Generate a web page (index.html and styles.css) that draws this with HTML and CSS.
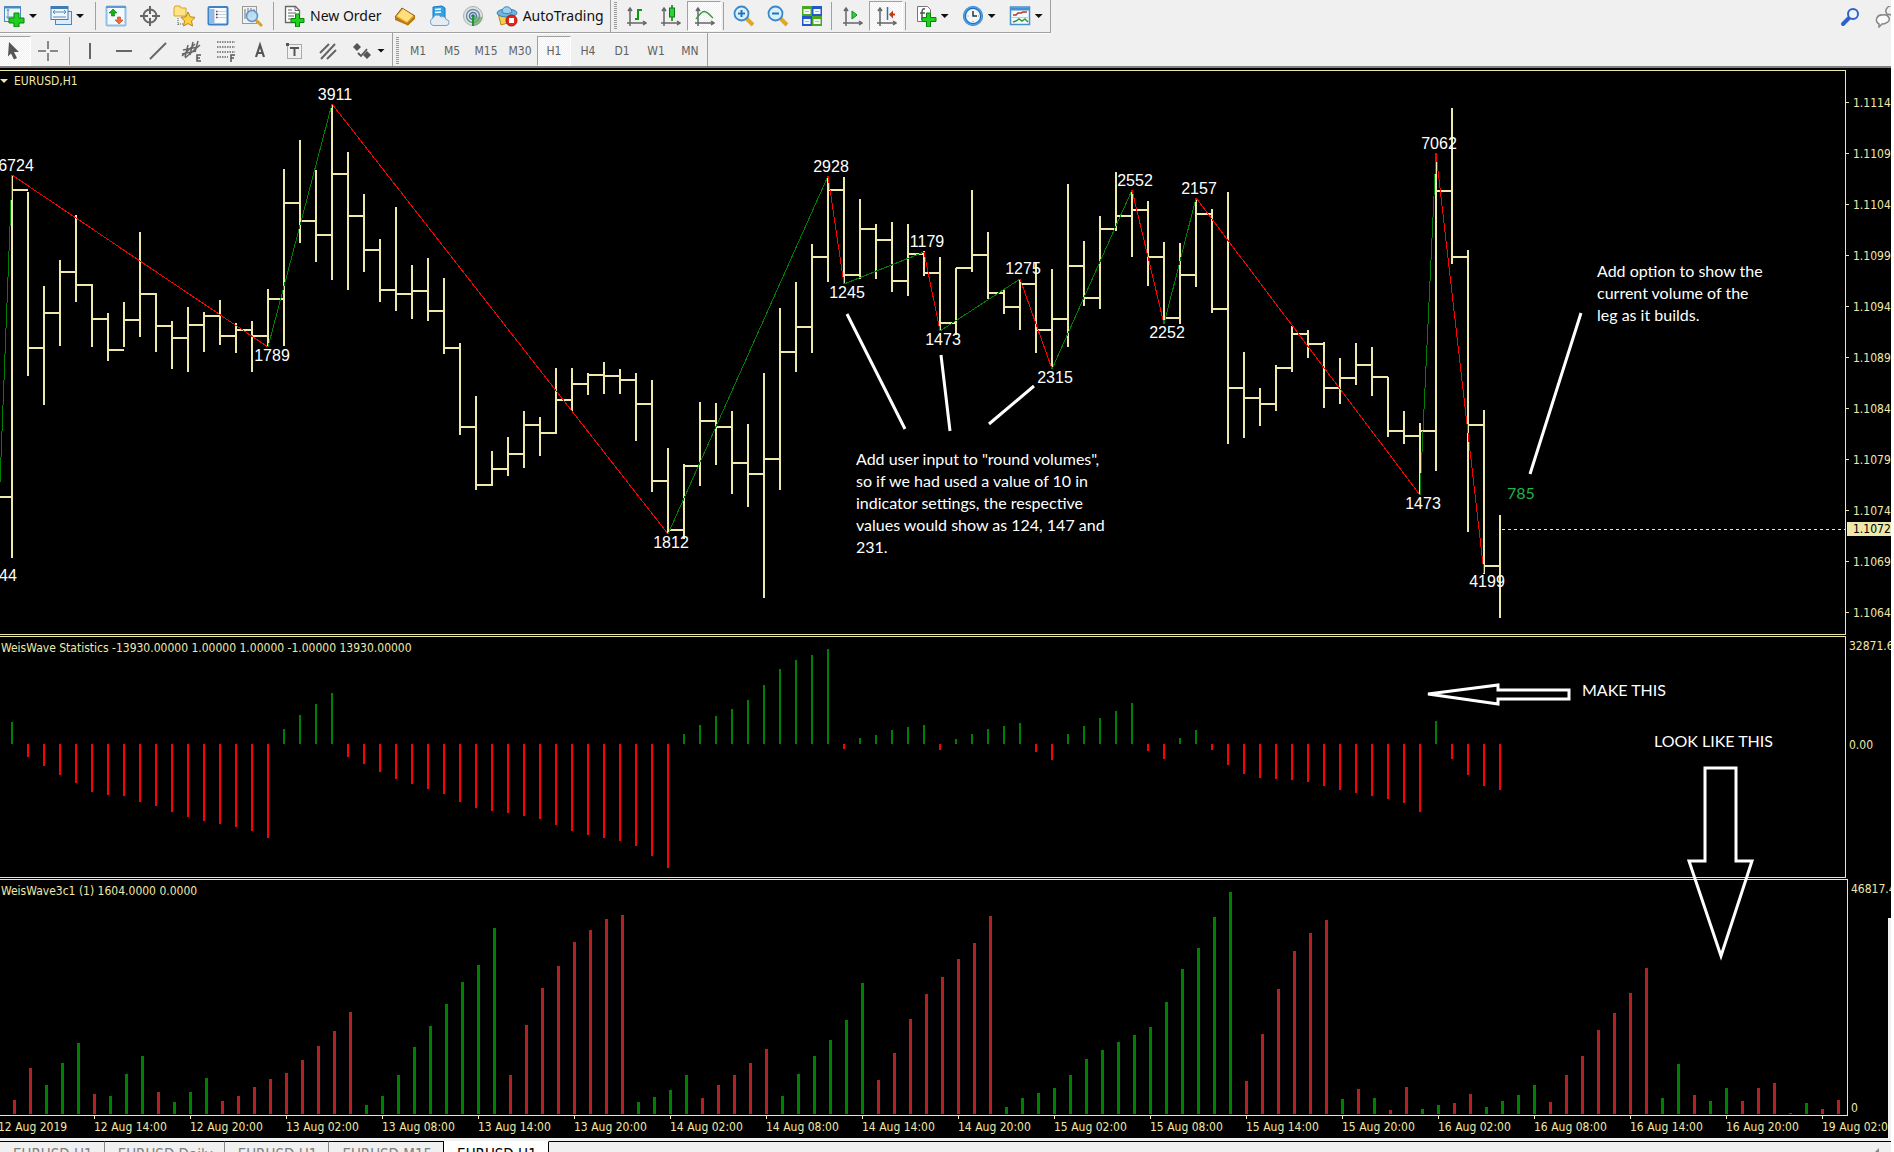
FILE: index.html
```html
<!DOCTYPE html>
<html lang="en">
<head>
<meta charset="utf-8">
<meta name="viewport" content="width=device-width, initial-scale=1">
<title>EURUSD,H1</title>
<link rel="stylesheet" href="styles.css">
</head>
<body>
<div class="window">
<header class="toolbars">
  <div class="toolbar-row">
    <div class="toolbar toolbar-standard">
      <button class="tool split" aria-label="New chart"><span class="icon"><svg viewBox="0 0 22 22"><rect x="1.500" y="1.500" width="16" height="15" fill="#eaf4fc" stroke="#4a88bd"/><path d="M1 2.500h17" stroke="#4a88bd" stroke-width="2"/><path d="M5 5v9M3 12h9M4 6l1-2 1 2" stroke="#6d8fae" fill="none"/><path d="M11 8h5v5h5v5h-5v4h-5v-4H6v-5h5z" fill="#1fd01f" stroke="#07840c"/></svg></span><span class="caret"></span></button>
      <button class="tool split" aria-label="Profiles"><span class="icon"><svg viewBox="0 0 22 22"><rect x="5.500" y="6.500" width="16" height="13" fill="#dcecf8" stroke="#4a88bd"/><rect x="1" y="1.500" width="17" height="13" fill="#eef6fd" stroke="#3f7cb5"/><path d="M1 3h17" stroke="#3f7cb5" stroke-width="2"/><path d="M3 7h13M5 5L3 7l2 2M14 5l2 2-2 2M3 12h13" stroke="#5a87b0" fill="none"/></svg></span><span class="caret"></span></button>
      <span class="sep"></span>
      <button class="tool" aria-label="Market watch"><span class="icon"><svg viewBox="0 0 22 22"><rect x="1.500" y="1.500" width="19" height="19" rx="1" fill="#f3faff" stroke="#8fbfe6" stroke-width="2"/><path d="M1 2h20" stroke="#5b9bd5" stroke-width="2"/><path d="M8 4l4 4H9.500v3h-3V8H4z" fill="#18b018" stroke="#067006" stroke-width=".6"/><path d="M14 19l-4-4h2.500v-3h3v3H18z" fill="#f2683b" stroke="#c13c10" stroke-width=".6"/></svg></span></button>
      <button class="tool" aria-label="Data window"><span class="icon"><svg viewBox="0 0 22 22"><circle cx="11" cy="11" r="6.500" fill="none" stroke="#666" stroke-width="2"/><path d="M11 1v8M11 13v8M1 11h8M13 11h8" stroke="#666" stroke-width="2"/></svg></span></button>
      <button class="tool" aria-label="Navigator"><span class="icon"><svg viewBox="0 0 22 22"><path d="M1 3l1-2h5l1 2h5v8H1z" fill="#ffe486" stroke="#d4a22a"/><path d="M5 13v7M5 19h6" stroke="#555" stroke-dasharray="1 1"/><path d="M15 7l2.200 4.800 5 .6-3.700 3.500 1 5.100-4.500-2.500-4.500 2.500 1-5.100L8 12.400l5-.6z" fill="#ffd23c" stroke="#b9851a"/></svg></span></button>
      <button class="tool" aria-label="Terminal"><span class="icon"><svg viewBox="0 0 22 22"><rect x="1.500" y="2" width="19" height="17.500" rx="1" fill="#f6fbff" stroke="#3d82c4" stroke-width="2"/><rect x="3" y="4" width="4.500" height="14" fill="#8ebce4"/><path d="M9 6.500h10M9 9.500h10M9 12.500h10" stroke="#c9d3dc"/><path d="M9 6.500h1.500M9 12.500h1.500" stroke="#d22" stroke-width="1.500"/><path d="M9 9.500h1.500" stroke="#222" stroke-width="1.500"/></svg></span></button>
      <button class="tool" aria-label="Strategy tester"><span class="icon"><svg viewBox="0 0 22 22"><rect x="1.500" y="1.500" width="14" height="17" fill="#f1f1f1" stroke="#999"/><path d="M4 4v10M7 3v8M10 3v9M13 4v6" stroke="#777"/><circle cx="11" cy="11" r="5.500" fill="#b9dcf6" fill-opacity=".85" stroke="#5b97cd" stroke-width="1.500"/><path d="M15 15l6 6" stroke="#d7a523" stroke-width="3"/></svg></span></button>
      <span class="sep"></span>
      <button class="tool labelled"><span class="icon"><svg viewBox="0 0 22 22"><path d="M2.500 1.500h10l4 4v12h-14z" fill="#fff" stroke="#666" stroke-width="1.300"/><path d="M12 1.500v4h4M5 5h4M5 8h8M5 11h6M5 14h4" stroke="#666" fill="none"/><path d="M12.500 9h4v4.500h4.500v4h-4.500V22h-4v-4.500H8v-4h4.500z" fill="#1fd01f" stroke="#07840c"/></svg></span>New Order</button>
      <button class="tool" aria-label="MetaEditor"><span class="icon"><svg viewBox="0 0 22 22"><path d="M1 12l7-9 13 8-7 9z" fill="#e2a52c" stroke="#8a5c0e"/><path d="M3 11l6-7 10 6.500-6 6.500z" fill="#ffdf7c"/><path d="M1 12l12 6 8-7v3l-7 6.500L1 15z" fill="#b87a14"/></svg></span></button>
      <button class="tool" aria-label="Virtual hosting"><span class="icon"><svg viewBox="0 0 22 22"><path d="M5 2l9-1 3 2v11H5z" fill="#2fa3ea" stroke="#1479bd"/><path d="M7 4.500l6-.6M7 7.500l6-.6" stroke="#fff" stroke-width="1.500"/><path d="M5 20.500a4 4 0 010-7.500 4.500 4.500 0 018-1 3.500 3.500 0 015 2.500 3 3 0 010 6z" fill="#e4ecf6" stroke="#7d9cc6"/></svg></span></button>
      <button class="tool" aria-label="Signals"><span class="icon"><svg viewBox="0 0 22 22"><circle cx="11" cy="11" r="9.500" fill="#dfe5e5" stroke="#a5b2b2"/><circle cx="11" cy="11" r="6.500" fill="none" stroke="#7892a5" stroke-width="1.500"/><circle cx="11" cy="11" r="3.500" fill="none" stroke="#4c77a3" stroke-width="1.500"/><path d="M11 11v10c5 0 9-4 9.500-9" fill="#65ac65" fill-opacity=".7"/><circle cx="11" cy="11" r="1.800" fill="#2b62a0"/><path d="M11 11v10" stroke="#1b9a2c" stroke-width="2"/></svg></span></button>
      <button class="tool labelled"><span class="icon"><svg viewBox="0 0 22 22"><path d="M2 8l3 12 10-3 4-8z" fill="#f5cf4e" stroke="#b98a1c"/><ellipse cx="11" cy="8" rx="10" ry="4" fill="#6fb4dd" stroke="#3b82b4"/><path d="M6 7c0-7 9-7 10 0-2 2-8 2-10 0z" fill="#9dd2ee" stroke="#3b82b4"/><circle cx="15.500" cy="15.500" r="5.500" fill="#e4261b" stroke="#a5150d"/><rect x="13" y="13" width="5" height="5" fill="#fff"/></svg></span>AutoTrading</button>
    </div>
    <div class="toolbar toolbar-charts">
      <span class="grip"></span>
      <button class="tool" aria-label="Bar chart"><span class="icon"><svg viewBox="0 0 22 22"><path d="M5 3v18M2 18h19M3 6l2-3 2 3M18 16l3 2-3 2" stroke="#666" stroke-width="1.500" fill="none"/><path d="M13 4v11M13 5h4M10 14h3" stroke="#0a9a12" stroke-width="2"/></svg></span></button>
      <button class="tool" aria-label="Candlesticks"><span class="icon"><svg viewBox="0 0 22 22"><path d="M5 3v18M2 18h19M3 6l2-3 2 3M18 16l3 2-3 2" stroke="#666" stroke-width="1.500" fill="none"/><path d="M13 0v16" stroke="#087a0e" stroke-width="1.500"/><rect x="10.500" y="3" width="5" height="9" fill="#2ed13a" stroke="#087a0e"/></svg></span></button>
      <button class="tool pressed" aria-label="Line chart" aria-pressed="true"><span class="icon"><svg viewBox="0 0 22 22"><path d="M5 3v18M2 18h19M3 6l2-3 2 3M18 16l3 2-3 2" stroke="#666" stroke-width="1.500" fill="none"/><path d="M3 14c4-5 7-9 10-7 3 1 4 4 7 6" stroke="#3a9a42" stroke-width="1.500" fill="none"/></svg></span></button>
      <span class="sep"></span>
      <button class="tool" aria-label="Zoom in"><span class="icon"><svg viewBox="0 0 22 22"><path d="M13 13l7 7" stroke="#dcaa28" stroke-width="4"/><circle cx="8.500" cy="8.500" r="7" fill="#d8effd" stroke="#3c87c8" stroke-width="1.800"/><path d="M8.500 5v7M5 8.500h7" stroke="#2b72b5" stroke-width="2"/></svg></span></button>
      <button class="tool" aria-label="Zoom out"><span class="icon"><svg viewBox="0 0 22 22"><path d="M13 13l7 7" stroke="#dcaa28" stroke-width="4"/><circle cx="8.500" cy="8.500" r="7" fill="#d8effd" stroke="#3c87c8" stroke-width="1.800"/><path d="M5 8.500h7" stroke="#2b72b5" stroke-width="2"/></svg></span></button>
      <button class="tool" aria-label="Tile windows"><span class="icon"><svg viewBox="0 0 22 22"><path d="M1 1h10v10H1zM11 11h10v10H11z" fill="#4aa81c"/><path d="M11 1h10v10H11zM1 11h10v10H1z" fill="#2457c8"/><path d="M2.500 4h7v5h-7zM12.500 4h7v5h-7zM2.500 14h7v5h-7zM12.500 14h7v5h-7z" fill="#f4f8ff"/><path d="M4 6.500h4M14 6.500h4M4 16.500h4M14 16.500h4" stroke="#a8bcd4"/></svg></span></button>
      <span class="sep"></span>
      <button class="tool" aria-label="Auto scroll"><span class="icon"><svg viewBox="0 0 22 22"><path d="M5 3v18M2 18h19M3 6l2-3 2 3M18 16l3 2-3 2" stroke="#666" stroke-width="1.500" fill="none"/><path d="M11 6l5 4-5 4z" fill="#36d045" stroke="#0a8a14"/></svg></span></button>
      <button class="tool pressed" aria-label="Chart shift" aria-pressed="true"><span class="icon"><svg viewBox="0 0 22 22"><path d="M5 3v18M2 18h19M3 6l2-3 2 3M18 16l3 2-3 2" stroke="#666" stroke-width="1.500" fill="none"/><path d="M12.500 2v13" stroke="#2b6fae" stroke-width="1.500"/><path d="M20 9.500h-5" stroke="#c5380e" stroke-width="2"/><path d="M14 9.500l4-4v8z" fill="#c5380e"/></svg></span></button>
      <span class="sep"></span>
      <button class="tool split" aria-label="Indicators"><span class="icon"><svg viewBox="0 0 22 22"><path d="M2.500 1.500h10l3 3v12h-13z" fill="#fff" stroke="#777"/><path d="M10 4c-3-1-3 2-3 5v6M5 8h5" stroke="#555" stroke-width="1.500" fill="none"/><path d="M11.500 8h4v4.500H21v4h-5.500V22h-4v-5.500H7v-4h4.500z" fill="#1fd01f" stroke="#07840c"/></svg></span><span class="caret"></span></button>
      <button class="tool split" aria-label="Periods"><span class="icon"><svg viewBox="0 0 22 22"><circle cx="11" cy="11" r="10" fill="#1f6fc0"/><circle cx="11" cy="11" r="9" fill="none" stroke="#4ea0e4" stroke-width="1.500"/><circle cx="11" cy="11" r="7" fill="#f3f7fb"/><path d="M11 6v5h4" stroke="#333" stroke-width="1.500" fill="none"/><path d="M11 16v1M5.500 11h1M16 11h1" stroke="#888"/></svg></span><span class="caret"></span></button>
      <button class="tool split" aria-label="Templates"><span class="icon"><svg viewBox="0 0 22 22"><rect x="1.500" y="2" width="19" height="17.500" fill="#f5faff" stroke="#4a90cc" stroke-width="1.500"/><path d="M1 4h20" stroke="#4a90cc" stroke-width="3"/><path d="M4 10h3l2-2h3l2-1h4" stroke="#b33a22" stroke-width="1.500" fill="none"/><path d="M3 12.500h16" stroke="#b8d0e4"/><path d="M4 17l3-1 3-2 3 2 3-2 3 3" stroke="#2f9a3c" stroke-width="1.500" fill="none"/></svg></span><span class="caret"></span></button>
    </div>
    <div class="corner-tools">
      <button class="corner" aria-label="Search"><svg viewBox="0 0 22 22"><path d="M9 12l-6 6" stroke="#2f62c9" stroke-width="4" stroke-linecap="round"/><circle cx="13" cy="8" r="5" fill="#eef4fd" stroke="#2f62c9" stroke-width="2"/></svg></button>
      <button class="corner" aria-label="Chat"><svg viewBox="0 0 22 22"><path d="M13 8a5 5 0 017-7 6 5 0 012 9z" fill="#f2f2f2" stroke="#888" stroke-width="1.500"/><path d="M5 18c-5-3-2-10 4-9 6-1 9 6 3 8-1 1-3 1-4 1l-3 3z" fill="#fafafa" stroke="#888" stroke-width="1.500"/></svg></button>
    </div>
  </div>
  <div class="toolbar-row">
    <div class="toolbar toolbar-line">
      <button class="tool pressed" aria-label="Cursor" aria-pressed="true"><span class="icon"><svg viewBox="0 0 22 22"><path d="M6 2l10 10h-5l3 6-3 1.500-3-6-3 3z" fill="#555"/></svg></span></button>
      <button class="tool" aria-label="Crosshair"><span class="icon"><svg viewBox="0 0 22 22"><path d="M11 1v8M11 13v8M1 11h8M13 11h8" stroke="#666" stroke-width="1.500"/></svg></span></button>
      <span class="sep"></span>
      <button class="tool" aria-label="Vertical line"><span class="icon"><svg viewBox="0 0 22 22"><path d="M11 3v16" stroke="#666" stroke-width="2"/></svg></span></button>
      <button class="tool" aria-label="Horizontal line"><span class="icon"><svg viewBox="0 0 22 22"><path d="M3 11h16" stroke="#666" stroke-width="2"/></svg></span></button>
      <button class="tool" aria-label="Trendline"><span class="icon"><svg viewBox="0 0 22 22"><path d="M3 19L19 3" stroke="#666" stroke-width="2"/></svg></span></button>
      <button class="tool" aria-label="Equidistant channel"><span class="icon"><svg viewBox="0 0 22 22"><path d="M1 16L14 4M4 18L19 5M2 10l15-3M1 14l14-3M7 5L4 17M12 2L9 15M17 1l-3 11" stroke="#666" stroke-width="1.500"/><path d="M20 15h-4v6h4M16 18h3" stroke="#555" stroke-width="1.500" fill="none"/></svg></span></button>
      <button class="tool" aria-label="Fibonacci retracement"><span class="icon"><svg viewBox="0 0 22 22"><path d="M2 2h18M2 7h18M2 12h18M2 17h11" stroke="#666" stroke-width="1.500" stroke-dasharray="1.500 1"/><path d="M20 15h-4v7M16 18h3" stroke="#555" stroke-width="1.500" fill="none"/></svg></span></button>
      <button class="tool" aria-label="Text"><span class="icon"><svg viewBox="0 0 22 22"><path d="M7 17l4-12 4 12M8.500 13h5" stroke="#555" stroke-width="2.200" fill="none"/></svg></span></button>
      <button class="tool" aria-label="Text label"><span class="icon"><svg viewBox="0 0 22 22"><rect x="4.500" y="4.500" width="14" height="14" fill="none" stroke="#666" stroke-dasharray="1 1"/><path d="M3 3h3v3H3z" fill="#555"/><path d="M7 8h9M11.500 8v8" stroke="#555" stroke-width="2"/></svg></span></button>
      <button class="tool" aria-label="Pitchfork"><span class="icon"><svg viewBox="0 0 22 22"><path d="M3 13L12 4M4 19L18 4M10 19l9-9" stroke="#666" stroke-width="2"/></svg></span></button>
      <button class="tool split" aria-label="Arrows"><span class="icon"><svg viewBox="0 0 22 22"><path d="M6 3l4 4-4 4-4-4zM12 15h8l-4 4zM12 15l4-4 4 4z" fill="#555"/><path d="M7 13l3 3 6-7" stroke="#555" stroke-width="1.800" fill="none"/></svg></span><span class="caret"></span></button>
    </div>
    <div class="toolbar toolbar-periods">
      <span class="grip"></span>
      <button class="tool">M1</button>
      <button class="tool">M5</button>
      <button class="tool">M15</button>
      <button class="tool">M30</button>
      <button class="tool pressed" aria-pressed="true">H1</button>
      <button class="tool">H4</button>
      <button class="tool">D1</button>
      <button class="tool">W1</button>
      <button class="tool">MN</button>
    </div>
  </div>
</header>

<main class="charts">
  <section class="pane pane-price">
    <div class="plot">
      <h1 class="pane-title symbol">EURUSD,H1</h1>
      <svg class="canvas" role="img" aria-label="EURUSD hourly price bars">
        <g transform="translate(0 -71)">
          <path class="bars" d="M0 497H12M12 175V558M12 190H28M28 192V376M28 348H44M44 286V405M44 313H60M60 260V346M60 272H76M76 215V302M76 285H92M92 284V347M92 319H108M108 313V361M108 350H124M124 302V347M124 320H140M140 232V337M140 294H156M156 293V352M156 326H172M172 321V369M172 338H188M188 307V372M188 325H204M204 312V352M204 316H220M220 300V345M220 336H236M236 323V353M236 330H252M252 321V372M252 336H268M268 289V347M268 299H284M284 169V346M284 203H300M300 140V243M300 221H316M316 170V262M316 235H332M332 104V280M332 174H348M348 152V290M348 216H364M364 194V272M364 250H380M380 239V302M380 290H396M396 207V311M396 294H412M412 265V319M412 291H428M428 258V321M428 311H444M444 278V354M444 348H460M460 343V435M460 427H476M476 396V490M476 485H492M492 451V486M492 469H508M508 437V476M508 454H524M524 411V468M524 425H540M540 417V456M540 433H556M556 368V434M556 400H572M572 368V411M572 384H588M588 373V395M588 375H604M604 362V394M604 376H620M620 369V394M620 380H636M636 373V441M636 404H652M652 380V492M652 481H668M668 448V534M668 530H684M684 464V539M684 466H700M700 402V486M700 421H716M716 403V465M716 427H732M732 411V494M732 463H748M748 424V507M748 474H764M764 373V598M764 459H780M780 308V490M780 352H796M796 282V372M796 327H812M812 244V353M812 257H828M828 176V282M828 190H844M844 177V284M844 275H860M860 199V279M860 229H876M876 224V279M876 240H892M892 222V292M892 281H908M908 224V296M908 254H924M924 251V276M924 273H940M940 257V331M940 323H956M956 268V335M956 268H972M972 190V272M972 255H988M988 232V299M988 293H1004M1004 290V314M1004 307H1020M1020 279V330M1020 284H1036M1036 263V353M1036 330H1052M1052 269V369M1052 319H1068M1068 184V347M1068 266H1084M1084 241V306M1084 298H1100M1100 216V309M1100 229H1116M1116 172V231M1116 216H1132M1132 190V257M1132 210H1148M1148 201V286M1148 257H1164M1164 242V324M1164 318H1180M1180 243V324M1180 275H1196M1196 198V287M1196 214H1212M1212 209V313M1212 309H1228M1228 192V444M1228 388H1244M1244 352V438M1244 398H1260M1260 388V426M1260 404H1276M1276 365V411M1276 368H1292M1292 326V372M1292 334H1308M1308 330V358M1308 344H1324M1324 342V408M1324 388H1340M1340 358V404M1340 378H1356M1356 343V385M1356 365H1372M1372 347V396M1372 377H1388M1388 377V437M1388 431H1404M1404 411V444M1404 436H1420M1420 423V495M1420 431H1436M1436 153V471M1436 191H1452M1452 108V264M1452 257H1468M1468 250V532M1468 425H1484M1484 410V574M1484 566H1500M1500 515V618"/>
          <line class="bid" x1="1502" y1="529.500" x2="100%" y2="529.500"/>
          <path class="leg up" d="M-4 585L12 175M268 347L332 104M668 534L828 176M844 284L924 252M940 331L1020 279M1052 369L1132 190M1164 324L1196 198M1420 495L1436 153"/>
          <path class="leg down" d="M12 175L268 347M332 104L668 534M828 176L844 284M924 252L940 331M1020 279L1052 369M1132 190L1164 324M1196 198L1420 495M1436 153L1484 573"/>
          <g class="volumes">
            <text x="16" y="171">6724</text><text x="8" y="581">44</text><text x="272" y="361">1789</text><text x="335" y="100">3911</text>
            <text x="671" y="548">1812</text><text x="831" y="172">2928</text><text x="847" y="298">1245</text><text x="927" y="247">1179</text>
            <text x="943" y="345">1473</text><text x="1023" y="274">1275</text><text x="1055" y="383">2315</text><text x="1135" y="186">2552</text>
            <text x="1167" y="338">2252</text><text x="1199" y="194">2157</text><text x="1439" y="149">7062</text><text x="1423" y="509">1473</text><text x="1487" y="587">4199</text>
          </g>
        </g>
      </svg>
    </div>
    <div class="axis price-axis">
      <ul class="ticks">
        <li>1.1114</li><li>1.1109</li><li>1.1104</li><li>1.1099</li><li>1.1094</li><li>1.1089</li><li>1.1084</li><li>1.1079</li><li>1.1074</li><li>1.1069</li><li>1.1064</li>
      </ul>
      <span class="bid-tag">1.1072</span>
    </div>
  </section>

  <section class="pane pane-stats">
    <div class="plot">
      <h2 class="pane-title">WeisWave Statistics -13930.00000 1.00000 1.00000 -1.00000 13930.00000</h2>
      <svg class="canvas" role="img" aria-label="WeisWave Statistics histogram">
        <g transform="translate(0 -637)">
          <path class="histo up" d="M12 744V722M284 744V729M300 744V715M316 744V704M332 744V693M684 744V734M700 744V725M716 744V716M732 744V709M748 744V700M764 744V685M780 744V669M796 744V660M812 744V655M828 744V649M860 744V738M876 744V735M892 744V730M908 744V727M924 744V725M956 744V739M972 744V734M988 744V729M1004 744V726M1020 744V723M1068 744V734M1084 744V726M1100 744V718M1116 744V711M1132 744V703M1180 744V738M1196 744V730M1436 744V721"/>
          <path class="histo down" d="M28 744V757M44 744V766M60 744V775M76 744V783M92 744V792M108 744V795M124 744V796M140 744V802M156 744V806M172 744V812M188 744V817M204 744V821M220 744V824M236 744V827M252 744V831M268 744V838M348 744V757M364 744V764M380 744V772M396 744V779M412 744V784M428 744V789M444 744V794M460 744V802M476 744V808M492 744V811M508 744V813M524 744V816M540 744V819M556 744V825M572 744V831M588 744V835M604 744V838M620 744V841M636 744V846M652 744V856M668 744V868M844 744V749M940 744V750M1036 744V752M1052 744V760M1148 744V751M1164 744V759M1212 744V750M1228 744V765M1244 744V774M1260 744V778M1276 744V779M1292 744V780M1308 744V782M1324 744V786M1340 744V790M1356 744V793M1372 744V796M1388 744V799M1404 744V803M1420 744V812M1452 744V759M1468 744V775M1484 744V786M1500 744V790"/>
        </g>
      </svg>
    </div>
    <div class="axis stats-axis"><span>32871.6</span><span class="zero">0.00</span></div>
  </section>

  <section class="pane pane-wave">
    <div class="plot">
      <h2 class="pane-title">WeisWave3c1 (1) 1604.0000 0.0000</h2>
      <svg class="canvas" role="img" aria-label="WeisWave3c1 histogram">
        <g transform="translate(0 -880)">
          <path class="wave up" d="M46.500 1114V1085M62.500 1114V1063M78.500 1114V1043M110.500 1114V1096M126.500 1114V1074M142.500 1114V1056M174.500 1114V1102M190.500 1114V1092M206.500 1114V1078M366.500 1114V1105M382.500 1114V1096M398.500 1114V1075M414.500 1114V1047M430.500 1114V1026M446.500 1114V1004M462.500 1114V982M478.500 1114V965M494.500 1114V928M638.500 1114V1102M654.500 1114V1097M670.500 1114V1090M686.500 1114V1075M782.500 1114V1096M798.500 1114V1074M814.500 1114V1056M830.500 1114V1040M846.500 1114V1020M862.500 1114V983M1006.500 1114V1107M1022.500 1114V1098M1038.500 1114V1093M1054.500 1114V1088M1070.500 1114V1075M1086.500 1114V1059M1102.500 1114V1050M1118.500 1114V1042M1134.500 1114V1035M1150.500 1114V1027M1166.500 1114V1002M1182.500 1114V969M1198.500 1114V948M1214.500 1114V917M1230.500 1114V892M1342.500 1114V1099M1374.500 1114V1098M1422.500 1114V1109M1438.500 1114V1105M1486.500 1114V1107M1502.500 1114V1101M1518.500 1114V1095M1534.500 1114V1085M1662.500 1114V1098M1678.500 1114V1064M1710.500 1114V1101M1726.500 1114V1088M1790.500 1114V1113M1806.500 1114V1103"/>
          <path class="wave down" d="M14.500 1114V1100M30.500 1114V1068M94.500 1114V1094M158.500 1114V1092M222.500 1114V1101M238.500 1114V1096M254.500 1114V1087M270.500 1114V1079M286.500 1114V1073M302.500 1114V1060M318.500 1114V1046M334.500 1114V1031M350.500 1114V1012M510.500 1114V1075M526.500 1114V1025M542.500 1114V988M558.500 1114V966M574.500 1114V942M590.500 1114V930M606.500 1114V919M622.500 1114V915M702.500 1114V1098M718.500 1114V1085M734.500 1114V1075M750.500 1114V1063M766.500 1114V1049M878.500 1114V1080M894.500 1114V1053M910.500 1114V1019M926.500 1114V994M942.500 1114V977M958.500 1114V959M974.500 1114V943M990.500 1114V916M1246.500 1114V1081M1262.500 1114V1034M1278.500 1114V989M1294.500 1114V951M1310.500 1114V933M1326.500 1114V920M1358.500 1114V1089M1390.500 1114V1110M1406.500 1114V1087M1454.500 1114V1103M1470.500 1114V1094M1550.500 1114V1102M1566.500 1114V1075M1582.500 1114V1056M1598.500 1114V1030M1614.500 1114V1013M1630.500 1114V993M1646.500 1114V968M1694.500 1114V1095M1742.500 1114V1101M1758.500 1114V1088M1774.500 1114V1083M1822.500 1114V1109M1838.500 1114V1100"/>
        </g>
      </svg>
    </div>
    <div class="axis wave-axis"><span>46817.4</span><span>0</span></div>
  </section>

  <ol class="time-axis">
    <li>12 Aug 2019</li><li>12 Aug 14:00</li><li>12 Aug 20:00</li><li>13 Aug 02:00</li><li>13 Aug 08:00</li><li>13 Aug 14:00</li><li>13 Aug 20:00</li><li>14 Aug 02:00</li><li>14 Aug 08:00</li><li>14 Aug 14:00</li><li>14 Aug 20:00</li><li>15 Aug 02:00</li><li>15 Aug 08:00</li><li>15 Aug 14:00</li><li>15 Aug 20:00</li><li>16 Aug 02:00</li><li>16 Aug 08:00</li><li>16 Aug 14:00</li><li>16 Aug 20:00</li><li>19 Aug 02:00</li>
  </ol>

  <div class="annotations">
    <svg class="pointers" aria-hidden="true">
      <g transform="translate(0 -68)">
        <path d="M847 314L905 429M941 355L950 431M1034 386L989 424M1581 313L1530 474"/>
        <path d="M1428 694L1498 685V690H1569V699H1498V704Z"/>
        <path d="M1705 768H1736V861H1752L1721 956L1689 861H1705Z"/>
      </g>
    </svg>
    <p class="note note-round">Add user input to "round volumes",<br>so if we had used a value of 10 in<br>indicator settings, the respective<br>values would show as 124, 147 and<br>231.</p>
    <p class="note note-current">Add option to show the<br>current volume of the<br>leg as it builds.</p>
    <p class="note note-live">785</p>
    <p class="note note-make">MAKE THIS</p>
    <p class="note note-look">LOOK LIKE THIS</p>
  </div>
</main>

<nav class="tabs" aria-label="Open charts">
  <a class="tab" href="#">EURUSD,H1</a>
  <a class="tab" href="#">EURUSD,Daily</a>
  <a class="tab" href="#">EURUSD,H1</a>
  <a class="tab" href="#">EURUSD,M15</a>
  <a class="tab active" href="#" aria-current="page">EURUSD,H1</a>
  <span class="tab-rest"><button class="scroll-left" aria-label="Scroll tabs"></button></span>
</nav>
</div>
</body>
</html>
```
FILE: styles.css
```css
* { box-sizing: border-box; }

:root {
  --face: #f0f0f0;
  --edge: #a0a0a0;
  --ink: #eee8aa;
  --up: #008000;
  --down: #ff0000;
  --ui: "DejaVu Sans Condensed", "DejaVu Sans", sans-serif;
}

body {
  margin: 0;
  height: 100vh;
  overflow: hidden;
  background: #fff;
  font: 12px/14px var(--ui);
}

h1, h2, p, ul, ol { margin: 0; padding: 0; font-size: inherit; font-weight: normal; }
ul, ol { list-style: none; }

.window {
  margin-right: 3px;
  overflow: hidden;
  display: flex;
  flex-direction: column;
}

/* Toolbars */
.toolbars { background: var(--face); border-bottom: 2px solid #808080; }
.toolbar-row { display: flex; height: 33px; }
.toolbar {
  display: flex;
  align-items: center;
  border-right: 1px solid var(--edge);
}
.toolbar-row:first-child .toolbar { border-bottom: 1px solid var(--edge); box-shadow: 0 1px #fff; }
.toolbar-row:last-child .toolbar { padding-top: 2px; }
.toolbar-standard, .toolbar-line { margin-left: -3px; }
.tool {
  display: flex;
  align-items: center;
  justify-content: center;
  flex: none;
  width: 34px;
  height: 30px;
  margin: 0;
  padding: 0;
  border: 1px solid transparent;
  background: none;
  color: #606060;
  font: 12px/14px var(--ui);
}
.toolbar-standard .tool { color: #111; }
.tool.pressed {
  background: repeating-conic-gradient(#fff 0 25%, #f0f0f0 0 50%) 0 0 / 2px 2px;
  border-color: var(--edge) #fff #fff var(--edge);
}
.tool.split { width: 47px; justify-content: flex-start; gap: 4px; padding-left: 5px; }
.toolbar-standard .tool.labelled {
  width: auto;
  padding: 0 5px;
  gap: 5px;
  font: 14px/20px "Noto Sans", sans-serif;
}
.icon { display: block; width: 22px; height: 22px; flex: none; }
.icon svg { display: block; width: 100%; height: 100%; }
.caret {
  width: 8px;
  height: 4px;
  background: #111;
  clip-path: polygon(0 0, 100% 0, 50% 100%);
}
.sep { flex: none; width: 8px; height: 28px; background: linear-gradient(var(--edge), var(--edge)) center / 1px 100% no-repeat; }
.toolbar-charts .sep { width: 6px; }
.grip {
  flex: none;
  width: 3px;
  height: 28px;
  margin: 0 2px 0 3px;
  background: repeating-linear-gradient(#999 0 1px, transparent 1px 2px);
}
.corner-tools { display: flex; align-items: center; gap: 12px; margin-left: auto; margin-right: -5px; }
.corner { width: 22px; height: 22px; padding: 0; border: 0; background: none; }
.corner svg { display: block; width: 22px; height: 22px; }

/* Chart panes */
.charts {
  position: relative;
  display: flex;
  flex-direction: column;
  gap: 1px;
  padding-top: 2px;
  background: #000;
  color: var(--ink);
  overflow: hidden;
}
.charts::after {
  content: "";
  position: absolute;
  right: 0;
  top: 850px;
  bottom: 0;
  width: 3px;
  background: var(--face);
}
.pane { display: flex; }
.plot {
  flex: 1;
  min-width: 0;
  position: relative;
  border: 1px solid var(--ink);
  border-left: 0;
}
.canvas { display: block; width: 100%; overflow: hidden; }
.pane-price .canvas { height: 563px; }
.pane-stats .canvas { height: 240px; }
.pane-wave .canvas { height: 235px; }
.pane-title { position: absolute; left: 1px; top: 4px; white-space: nowrap; }
.pane-title.symbol { left: 0; top: 3px; display: flex; align-items: center; gap: 6px; }
.symbol::before {
  content: "";
  width: 8px;
  height: 4px;
  background: var(--ink);
  clip-path: polygon(0 0, 100% 0, 50% 100%);
}

.bars { stroke: var(--ink); stroke-width: 2; fill: none; }
.bid { stroke: var(--ink); stroke-dasharray: 3 3; }
.leg, .histo, .wave { fill: none; }
.leg { stroke-width: 1; shape-rendering: crispEdges; }
.histo { stroke-width: 2; }
.wave { stroke-width: 3; }
.up { stroke: var(--up); }
.down { stroke: var(--down); }
.wave.down { stroke: #b22222; }
.volumes { fill: #fff; font: 16px "Liberation Sans", sans-serif; text-anchor: middle; }

/* Value scales */
.axis { flex: none; width: 45px; overflow: hidden; white-space: nowrap; }
.price-axis { position: relative; padding-top: 7px; }
.ticks { margin-bottom: -16px; }
.ticks li { display: flex; align-items: center; gap: 4px; height: 51px; }
.ticks li::before { content: ""; width: 3px; height: 1px; background: var(--ink); }
.bid-tag {
  position: absolute;
  left: 1px;
  right: 0;
  top: 452px;
  padding-left: 6px;
  background: var(--ink);
  color: #000;
}
.stats-axis, .wave-axis { display: flex; flex-direction: column; padding: 3px 0 1px 3px; }
.stats-axis .zero { margin-top: 85px; }
.wave-axis { width: 43px; justify-content: space-between; }

.time-axis { display: flex; height: 22px; margin: -1px 0 0 -2px; overflow: hidden; }
.time-axis li {
  flex: none;
  width: 96px;
  padding-top: 4px;
  white-space: nowrap;
  background: linear-gradient(var(--ink), var(--ink)) 0 0 / 1px 3px no-repeat;
}

/* Notes laid over the panes */
.annotations { position: absolute; inset: 0; color: #fff; }
.pointers { width: 100%; height: 100%; fill: none; stroke: #fff; stroke-width: 3; }
.note { position: absolute; font: 16px/22px Lato, sans-serif; white-space: nowrap; }
.note-round { left: 856px; top: 380px; }
.note-current { left: 1597px; top: 192px; }
.note-live { left: 1507px; top: 414px; color: #22b14c; }
.note-make { left: 1582px; top: 611px; }
.note-look { left: 1654px; top: 662px; }

/* Chart tabs */
.tabs { display: flex; border-top: 3px solid var(--face); background: var(--face); }
.tab, .tab-rest { border-top: 1px solid #000; }
.tab {
  padding: 4px 11px 6px 13px;
  border-right: 1px solid #888;
  color: #808080;
  font: 15px/18px var(--ui);
  text-decoration: none;
  white-space: nowrap;
}
.tab.active { background: #fff; color: #000; border-top-color: #fff; border-right-color: #000; box-shadow: -1px 0 #000; }
.tab-rest { flex: 1; display: flex; justify-content: flex-end; padding: 6px 12px 0 0; }
.scroll-left {
  width: 5px;
  height: 10px;
  padding: 0;
  border: 0;
  background: #888;
  clip-path: polygon(100% 0, 100% 100%, 0 50%);
}
```
